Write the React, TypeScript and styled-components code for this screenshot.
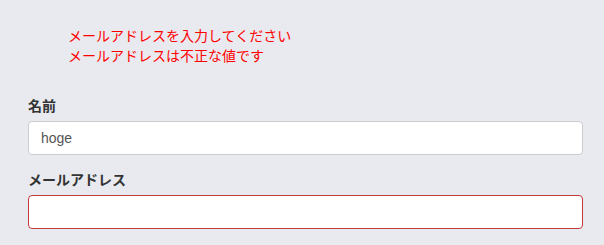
import styled, { createGlobalStyle } from 'styled-components';

const GlobalStyle = createGlobalStyle`
	html, body {
		margin: 0;
		padding: 0;
		background-color: #e8eaef;
	}
	body {
		font-family: 'Liberation Sans', 'Noto Sans CJK JP', sans-serif;
		font-size: 14px;
		line-height: 20px;
		color: #333;
	}
`;

const fields = [
	{ label: '名前', value: 'hoge', error: false },
	{ label: 'メールアドレス', value: '', error: true },
];

const errors = ['メールアドレスを入力してください', 'メールアドレスは不正な値です'];

export default function App() {
	return (
		<>
			<GlobalStyle />
			<Page>
				<ErrorList>
					{errors.map((e) => (
						<li key={e}>{e}</li>
					))}
				</ErrorList>
				<Form>
					{fields.map((f) => (
						<FormGroup key={f.label}>
							<Label>{f.label}</Label>
							<Input type="text" defaultValue={f.value} $error={f.error} />
						</FormGroup>
					))}
				</Form>
			</Page>
		</>
	);
}

const Page = styled.div`
	padding: 26px 21px 0 28px;
`;

const ErrorList = styled.ul`
	margin: 0 0 30px;
	padding-left: 40px;
	list-style: none;
	color: #ff0000;
	line-height: 20px;
`;

const Form = styled.form`
	display: flex;
	flex-direction: column;
	gap: 15px;
`;

const FormGroup = styled.div`
	display: flex;
	flex-direction: column;
	gap: 5px;
`;

const Label = styled.label`
	font-weight: bold;
	color: #333;
`;

const Input = styled.input<{ $error: boolean }>`
	box-sizing: border-box;
	width: 100%;
	height: 34px;
	padding: 6px 12px;
	font-family: inherit;
	font-size: 14px;
	color: #555;
	background-color: #fff;
	border: 1px solid ${(p) => (p.$error ? '#c3363a' : '#ccc')};
	border-radius: 4px;
	outline: none;
`;
